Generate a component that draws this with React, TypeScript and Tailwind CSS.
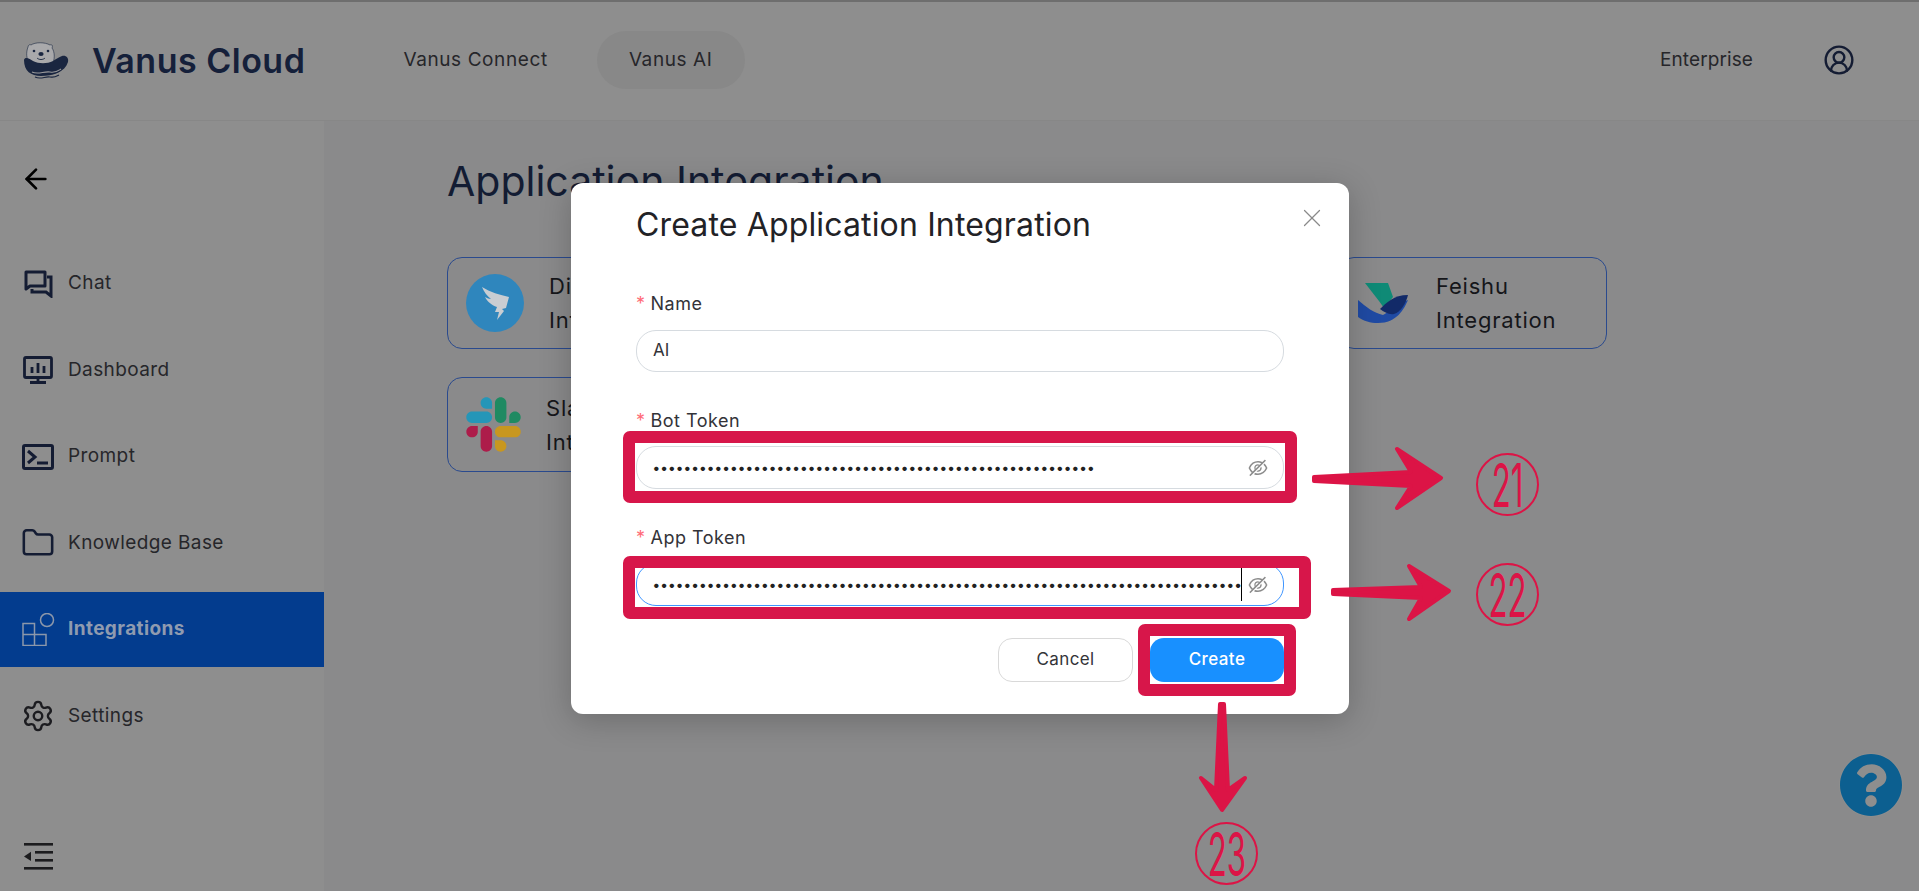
import { ArrowLeft, CircleUserRound, Folder, Settings, X } from "lucide-react";
import { AiOutlineEyeInvisible } from "react-icons/ai";
import { FaQuestionCircle } from "react-icons/fa";
import type { ReactNode } from "react";

const font = { fontFamily: "Inter, 'Liberation Sans', sans-serif" };

function ChatIcon() {
  return (
    <svg viewBox="0 0 30 28" className="h-[28px] w-[30px]" fill="none" stroke="#141c33" strokeWidth="3">
      <path d="M3 2h19v14H7l-4 3z" strokeLinejoin="round" />
      <path d="M24 7h4v19l-5-4H9v-3" />
    </svg>
  );
}

function DashIcon() {
  return (
    <svg viewBox="0 0 30 28" className="h-[28px] w-[30px]" fill="none" stroke="#141c33" strokeWidth="2.8">
      <rect x="1.5" y="1.5" width="27" height="20" rx="1.5" />
      <path d="M15 22v4M7 26.5h16M9 11v6M15 7v10M21 10v7" />
    </svg>
  );
}

function PromptIcon() {
  return (
    <svg viewBox="0 0 32 26" className="h-[26px] w-[32px]" fill="none" stroke="#141c33" strokeWidth="3">
      <rect x="1.5" y="1.5" width="29" height="23" rx="1.5" />
      <path d="M6 7l7 6-7 6M15 19h11" />
    </svg>
  );
}

function IntegrationsIcon() {
  return (
    <svg viewBox="0 0 33 33" className="h-[33px] w-[33px]" fill="none" stroke="#8c97aa" strokeWidth="1.5">
      <path d="M1 10.5h11.5v22H1zM1 21.5h23v11H12.5" />
      <circle cx="25" cy="7" r="6.5" />
    </svg>
  );
}

function CollapseIcon() {
  return (
    <svg viewBox="0 0 29 27" className="h-[27px] w-[29px]" fill="#1c1c1e">
      <rect x="0" y="0" width="29" height="2.6" />
      <rect x="11" y="8" width="18" height="2.6" />
      <rect x="11" y="16" width="18" height="2.6" />
      <rect x="0" y="24" width="29" height="2.6" />
      <path d="M0 13.4l7-4.6v9.2z" />
    </svg>
  );
}

function Otter() {
  return (
    <svg viewBox="0 0 46 42" className="h-[42px] w-[46px]">
      <path d="M5 8c0-2 2-3 3-2 4-3 14-3 19 0 2-1 3 1 2 3 3 4 3 12 0 17H7C3 20 3 13 5 8z" fill="#a9a9ab" stroke="#1a2640" strokeWidth="0.6" />
      <path d="M1 21c0 11 7 16 17 16 12 0 24-4 27-14 1-4-2-7-6-6-3 1-6 3-9 5-6 3-14 3-20 0-3-2-8-5-9-1z" fill="#1a2640" />
      <path d="M9 33c6 4 11-1 17 1s9-1 12-3M12 38c6 3 10-1 15 0s7-1 9-2" fill="none" stroke="#1a2640" strokeWidth="1.2" />
      <path d="M9 33c6 3 12-1 18 0s8-1 11-3" fill="none" stroke="#9a9a9c" strokeWidth="1.1" />
      <ellipse cx="18" cy="15" rx="2.6" ry="2" fill="#1a2640" />
      <circle cx="11" cy="12" r="1.3" fill="#1a2640" />
      <circle cx="25" cy="12" r="1.3" fill="#1a2640" />
      <path d="M14 19c2 2 6 2 8 0" fill="none" stroke="#1a2640" strokeWidth="0.9" />
    </svg>
  );
}

function DingIcon() {
  return (
    <svg viewBox="0 0 58 58" className="h-[58px] w-[58px]">
      <circle cx="29" cy="29" r="29" fill="#2f86bd" />
      <path d="M16 13c8 5 18 8 27 10l-3 11-4 1 2 2-7 9 2-8h-4l2-5c-6-2-10-6-12-10 2 1 4 2 6 2-4-3-7-7-9-12z" fill="#c9cdd2" />
    </svg>
  );
}

function SlackIcon() {
  return (
    <svg viewBox="0 0 127 127" className="h-[55px] w-[55px]">
      <path d="M27.2 80c0 7.3-5.9 13.2-13.2 13.2C6.7 93.2.8 87.3.8 80c0-7.3 5.9-13.2 13.2-13.2h13.2V80zm6.6 0c0-7.3 5.9-13.2 13.2-13.2 7.3 0 13.2 5.9 13.2 13.2v33c0 7.3-5.9 13.2-13.2 13.2-7.3 0-13.2-5.9-13.2-13.2V80z" fill="#ad1c4a" />
      <path d="M47 27c-7.3 0-13.2-5.9-13.2-13.2C33.8 6.5 39.7.6 47 .6c7.3 0 13.2 5.9 13.2 13.2V27H47zm0 6.7c7.3 0 13.2 5.9 13.2 13.2 0 7.3-5.9 13.2-13.2 13.2H13.9C6.6 60.1.7 54.2.7 46.9c0-7.3 5.9-13.2 13.2-13.2H47z" fill="#2596b8" />
      <path d="M99.9 46.9c0-7.3 5.9-13.2 13.2-13.2 7.3 0 13.2 5.9 13.2 13.2 0 7.3-5.9 13.2-13.2 13.2H99.9V46.9zm-6.6 0c0 7.3-5.9 13.2-13.2 13.2-7.3 0-13.2-5.9-13.2-13.2V13.8C66.9 6.5 72.8.6 80.1.6c7.3 0 13.2 5.9 13.2 13.2v33.1z" fill="#1f8a62" />
      <path d="M80.1 99.8c7.3 0 13.2 5.9 13.2 13.2 0 7.3-5.9 13.2-13.2 13.2-7.3 0-13.2-5.9-13.2-13.2V99.8h13.2zm0-6.6c-7.3 0-13.2-5.9-13.2-13.2 0-7.3 5.9-13.2 13.2-13.2h33.1c7.3 0 13.2 5.9 13.2 13.2 0 7.3-5.9 13.2-13.2 13.2H80.1z" fill="#c8971f" />
    </svg>
  );
}

function FeishuIcon() {
  return (
    <svg viewBox="0 0 50 40" className="h-[40px] w-[50px]">
      <path d="M7 0h23l5 14-9 11C20 16 13 8 7 0z" fill="#0f8a76" />
      <path d="M0 17c8 7 16 13 25 15 6-3 12-11 25-15-4 9-11 23-30 23-8 0-14-2-20-6z" fill="#1f4aa3" />
      <path d="M22 26c6-6 14-14 28-14-2 8-7 17-14 19-5 1-10-2-14-5z" fill="#122a68" />
    </svg>
  );
}

const navItems = [
  { label: "Chat", icon: <ChatIcon /> },
  { label: "Dashboard", icon: <DashIcon /> },
  { label: "Prompt", icon: <PromptIcon /> },
  { label: "Knowledge Base", icon: <Folder size={34} strokeWidth={1.8} color="#141c33" /> },
  { label: "Integrations", icon: <IntegrationsIcon />, active: true },
  { label: "Settings", icon: <Settings size={34} strokeWidth={1.7} color="#1c1c20" /> },
];

function Card({ icon, first, second, gap }: { icon: ReactNode; first: string; second: string; gap: string }) {
  return (
    <div className="flex items-center rounded-[15px] border border-[#2a4a8e] pl-[18px]">
      {icon}
      <div className={`${gap} text-[22px] leading-[34px] tracking-[0.8px] text-[#15161a]`}>
        <div>{first}</div>
        <div>{second}</div>
      </div>
    </div>
  );
}

function Field({ label, children, className }: { label: string; children: ReactNode; className: string }) {
  return (
    <div className={className}>
      <div className="flex h-6 items-center text-[18px] tracking-[0.5px] text-[#333338]">
        <span className="mr-[5px] text-[#ff6b78]">*</span>
        {label}
      </div>
      {children}
    </div>
  );
}

function Secret({ value, focused }: { value: string; focused?: boolean }) {
  return (
    <div
      className={`relative mt-[14px] flex h-[43px] items-center rounded-[20px] border pl-4 pr-[14px] ${
        focused ? "border-[#4096ff]" : "border-[#d6dbe0]"
      }`}
    >
      <input
        type="password"
        readOnly
        value={value}
        className="w-full min-w-0 bg-transparent text-[14px] font-bold tracking-[1.12px] text-[#222] outline-none"
      />
      {focused && <span className="absolute right-[41px] top-[4px] h-[33px] w-px bg-black" />}
      <AiOutlineEyeInvisible size={22} color="#8c8c8c" className="shrink-0" />
    </div>
  );
}

function Circled({ n, className }: { n: string; className: string }) {
  return (
    <div
      className={`absolute flex h-[63px] w-[63px] items-center justify-center rounded-full border-2 border-[#dc1446] ${className}`}
    >
      <span className="scale-x-[0.52] text-[60px] leading-none text-[#dc1446]">{n}</span>
    </div>
  );
}

export default function App() {
  return (
    <div className="relative h-[891px] w-[1919px] overflow-hidden bg-[#8a8a8b]" style={font}>
      <div className="h-[2px] bg-[#6e6e6e]" />
      <header className="flex h-[119px] items-center border-b border-[#878787] bg-[#8e8e8e] pb-[2px] pl-[23px] text-[19px] tracking-[0.6px] text-[#26262a]">
        <Otter />
        <span className="ml-[23px] text-[34px] font-semibold tracking-[0.5px] text-[#15203a]">Vanus Cloud</span>
        <span className="ml-[98px]">Vanus Connect</span>
        <span className="ml-[49px] flex h-[58px] w-[148px] items-center justify-center rounded-full bg-[#888888]">
          Vanus AI
        </span>
        <span className="ml-auto tracking-[0.1px]">Enterprise</span>
        <CircleUserRound size={32} strokeWidth={1.8} color="#141c33" className="ml-[70px] mr-[64px]" />
      </header>

      <div className="flex h-[770px]">
        <aside className="flex w-[324px] flex-col bg-[#8e8e8e] pt-[42px] text-[19px] tracking-[0.4px] text-[#26262a]">
          <ArrowLeft size={32} strokeWidth={2} color="#000" className="ml-[20px]" />
          <nav className="mt-[51px] flex flex-col gap-[11.5px]">
            {navItems.map((item) => (
              <div
                key={item.label}
                className={`flex h-[75px] items-center ${
                  item.active ? "bg-[#033c8e] font-bold text-[#8f9bb0]" : ""
                }`}
              >
                <span className="flex w-[68px] justify-center pl-[8px]">{item.icon}</span>
                {item.label}
              </div>
            ))}
          </nav>
          <div className="mt-auto pb-[21px] pl-[24px]">
            <CollapseIcon />
          </div>
        </aside>

        <main className="flex-1 pl-[123px] pt-[32px]">
          <h1 className="h-[56px] text-[41px] leading-[56px] text-[#131c33]">Application Integration</h1>
          <div className="mt-[48px] grid grid-cols-[268px_268px_268px] grid-rows-[92px_95px] gap-x-[178px] gap-y-[28px]">
            <Card icon={<DingIcon />} first="DingTalk" second="Integration" gap="ml-[25px]" />
            <div />
            <Card icon={<FeishuIcon />} first="Feishu" second="Integration" gap="ml-[28px]" />
            <Card icon={<SlackIcon />} first="Slack" second="Integration" gap="ml-[25px]" />
          </div>
        </main>
      </div>

      <div className="absolute bottom-[74px] right-[16px] flex h-[64px] w-[64px] items-center justify-center rounded-full bg-[#8e8e8e]">
        <FaQuestionCircle size={64} color="#0c5f90" />
      </div>

      <div className="absolute left-[571px] top-[183px] h-[531px] w-[778px] rounded-[12px] bg-white px-[65px] pt-[22px] shadow-[0_6px_32px_rgba(0,0,0,0.22)]">
        <h2 className="h-[39px] text-[32px] leading-[40px] tracking-[0.15px] text-[#222226]">Create Application Integration</h2>
        <X size={30} strokeWidth={1} color="#8a8a8a" className="absolute right-[22px] top-[20px]" />
        <Field label="Name" className="mt-[47px]">
          <div className="mt-[15px] flex h-[42px] items-center rounded-[20px] border border-[#d6dbe0] pl-4 text-[17px] text-[#333338]">
            AI
          </div>
        </Field>
        <Field label="Bot Token" className="mt-[36px]">
          <Secret value={"x".repeat(57)} />
        </Field>
        <Field label="App Token" className="mt-[36px]">
          <Secret value={"x".repeat(76)} focused />
        </Field>
        <div className="mt-[32px] flex justify-end gap-[17px] text-[17px] tracking-[0.4px]">
          <button className="h-[44px] w-[135px] rounded-[14px] border border-[#d9d9d9] bg-white text-[#333338]">
            Cancel
          </button>
          <button className="h-[44px] w-[134px] rounded-[14px] bg-[#1890ff] font-medium text-white">Create</button>
        </div>
      </div>

      <div className="pointer-events-none absolute left-[623px] top-[431px] h-[72px] w-[674px] rounded-[7px] border-[12px] border-[#d7164a]" />
      <div className="pointer-events-none absolute left-[623px] top-[556px] h-[63px] w-[688px] rounded-[7px] border-[12px] border-[#d7164a]" />
      <div className="pointer-events-none absolute left-[1138px] top-[624px] h-[72px] w-[158px] rounded-[7px] border-[12px] border-[#d7164a]" />

      <svg className="pointer-events-none absolute inset-0 h-[891px] w-[1919px]" viewBox="0 0 1919 891">
        <g fill="#dc1446" stroke="#dc1446" strokeWidth="4" strokeLinejoin="round">
          <path d="M1314 477L1411 472L1397 449L1441 478L1397 508L1411 486L1314 481Z" />
          <path d="M1333 590L1421 587L1409 566L1449 591L1409 619L1421 598L1333 594Z" />
          <path d="M1220 704L1224 704L1228 790L1245 778L1222 810L1201 778L1216 790Z" />
        </g>
      </svg>
      <Circled n="21" className="left-[1476px] top-[453px]" />
      <Circled n="22" className="left-[1476px] top-[563px]" />
      <Circled n="23" className="left-[1195px] top-[822px]" />
    </div>
  );
}
